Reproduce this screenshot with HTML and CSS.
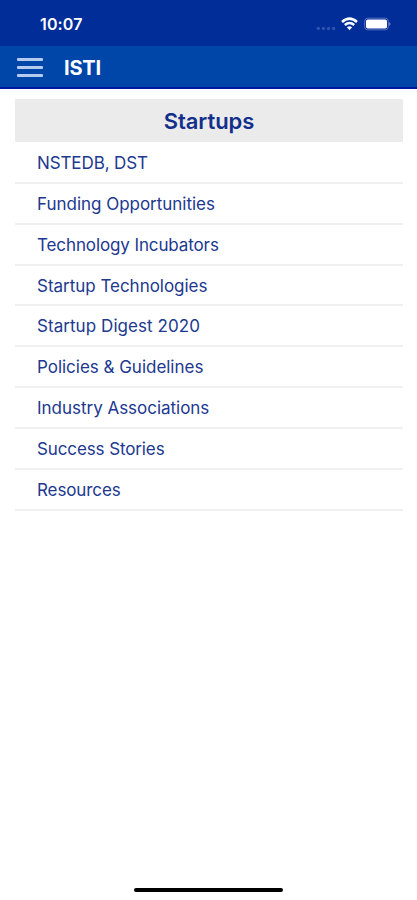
FILE: index.html
```html
<!DOCTYPE html>
<html lang="en">
<head>
<meta charset="utf-8">
<title>ISTI</title>
<link rel="stylesheet" href="styles.css">
</head>
<body>
<div class="status">
  <span class="time">10:07</span>
  <svg class="indicators" width="76" height="16" viewBox="0 0 76 16">
    <g fill="#2f52b0"><circle cx="2.3" cy="13.4" r="1.7"/><circle cx="7.4" cy="13.4" r="1.7"/><circle cx="12.5" cy="13.4" r="1.7"/><circle cx="17.6" cy="13.4" r="1.7"/></g>
    <g fill="none" stroke="#fff" stroke-width="2.5"><path d="M26 7Q33.5 .2 41 7"/><path d="M28.8 10Q33.5 6 38.2 10"/></g>
    <path d="M30.9 12.3Q33.5 10.3 36.1 12.3L33.5 15.2Z" fill="#fff"/>
    <rect x="48.7" y="3.2" width="23.6" height="11.6" rx="3" fill="none" stroke="#5c72c0"/>
    <rect x="50" y="4.4" width="21" height="9.2" rx="1.8" fill="#fff"/>
    <path d="M73.2 7q2.4 2 0 4z" fill="#8a9bd4"/>
  </svg>
</div>
<header class="bar">
  <div class="menu"><i></i><i></i><i></i></div>
  <span class="brand">ISTI</span>
</header>
<main class="content">
  <h1 class="title"><span>Startups</span></h1>
  <ul class="list">
    <li class="tight"><span>NSTEDB, DST</span></li>
    <li><span>Funding Opportunities</span></li>
    <li class="tight"><span>Technology Incubators</span></li>
    <li><span>Startup Technologies</span></li>
    <li class="wide"><span>Startup Digest 2020</span></li>
    <li><span>Policies &amp; Guidelines</span></li>
    <li><span>Industry Associations</span></li>
    <li class="tight"><span>Success Stories</span></li>
    <li class="tight"><span>Resources</span></li>
  </ul>
</main>
<div class="home"></div>
</body>
</html>
```
FILE: styles.css
```css
* { box-sizing: border-box; }
body { margin: 0; height: 900px; display: flex; flex-direction: column; background: #fff; font-family: Inter, sans-serif; overflow: hidden; }
.status { height: 46px; flex: none; background: #002d98; display: flex; justify-content: space-between; padding: 15px 25px 0 40px; color: #fff; }
.time { font-size: 16px; line-height: 19px; font-weight: 600; letter-spacing: 0.15px; }
.bar { height: 43px; flex: none; background: #0045a8; border-bottom: 2px solid #0018a0; display: flex; align-items: center; padding: 2px 0 0 17px; color: #fff; }
.menu { width: 26px; height: 19px; display: flex; flex-direction: column; justify-content: space-between; margin-right: 21px; }
.menu i { height: 3px; background: #b4cbee; border-radius: 1px; }
.brand { font-size: 20px; font-weight: 700; letter-spacing: -0.2px; }
.content { padding: 10px 14px 0 15px; flex: 1; }
.title { margin: 0 0 1px; height: 43px; line-height: 44px; background: #ebebeb; color: #132f8c; font-size: 22px; font-weight: 600; text-align: center; border-radius: 1px; letter-spacing: -0.05px; }
.list { margin: 0; padding: 0; list-style: none; }
.list li { height: 40.85px; line-height: 41px; padding-left: 22px; border-bottom: 2px solid #f0f0f0; color: #20388f; font-size: 17px; letter-spacing: -0.02px; }
.list .tight { letter-spacing: -0.11px; }
.list .wide { letter-spacing: 0.06px; }
.home { width: 149px; height: 4px; flex: none; margin: 0 auto 8px 134px; border-radius: 2px; background: #000; }
```
